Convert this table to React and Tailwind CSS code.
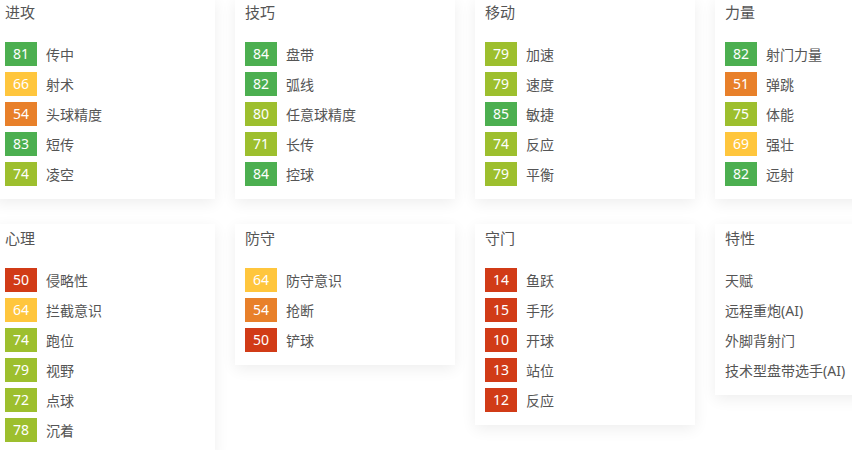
import React from "react";

const G = "bg-[#4caf50]";
const L = "bg-[#9dbf2e]";
const Y = "bg-[#ffc63d]";
const O = "bg-[#e8802a]";
const R = "bg-[#d13b17]";

const data = [
  { title: "进攻", items: [[81, G, "传中"], [66, Y, "射术"], [54, O, "头球精度"], [83, G, "短传"], [74, L, "凌空"]] },
  { title: "技巧", items: [[84, G, "盘带"], [82, G, "弧线"], [80, L, "任意球精度"], [71, L, "长传"], [84, G, "控球"]] },
  { title: "移动", items: [[79, L, "加速"], [79, L, "速度"], [85, G, "敏捷"], [74, L, "反应"], [79, L, "平衡"]] },
  { title: "力量", items: [[82, G, "射门力量"], [51, O, "弹跳"], [75, L, "体能"], [69, Y, "强壮"], [82, G, "远射"]] },
  { title: "心理", items: [[50, R, "侵略性"], [64, Y, "拦截意识"], [74, L, "跑位"], [79, L, "视野"], [72, L, "点球"], [78, L, "沉着"]] },
  { title: "防守", items: [[64, Y, "防守意识"], [54, O, "抢断"], [50, R, "铲球"]] },
  { title: "守门", items: [[14, R, "鱼跃"], [15, R, "手形"], [10, R, "开球"], [13, R, "站位"], [12, R, "反应"]] },
  { title: "特性", traits: ["天赋", "远程重炮(AI)", "外脚背射门", "技术型盘带选手(AI)"] },
];

function Card({ c }) {
  return (
    <div className="bg-white w-[220px] px-[10px] pt-[4px] pb-[13px] shadow-[0_4px_14px_rgba(0,0,0,0.07)]">
      <div className="text-[15px] leading-[20px] text-[#555] h-[40px]">{c.title}</div>
      <div className="flex flex-col gap-[6px]">
        {c.items &&
          c.items.map(([n, bg, label], i) => (
            <div key={i} className="flex items-center h-[24px]">
              <div className={`${bg} w-[32px] h-[24px] flex items-center justify-center text-white text-[14px] leading-none`}>{n}</div>
              <div className="ml-[9px] text-[14px] text-[#555] whitespace-nowrap">{label}</div>
            </div>
          ))}
        {c.traits &&
          c.traits.map((t, i) => (
            <div key={i} className="flex items-center h-[24px] text-[14px] text-[#555] whitespace-nowrap">{t}</div>
          ))}
      </div>
    </div>
  );
}

export default function App() {
  return (
    <div className="w-[852px] h-[450px] overflow-hidden bg-white" style={{ fontFamily: '"Noto Sans", "Noto Sans CJK SC", sans-serif' }}>
      <div className="grid grid-cols-[220px_220px_220px_220px] gap-x-[20px] gap-y-[25px] items-start ml-[-5px] mt-[-2px]">
        {data.map((c, i) => (
          <Card key={i} c={c} />
        ))}
      </div>
    </div>
  );
}
